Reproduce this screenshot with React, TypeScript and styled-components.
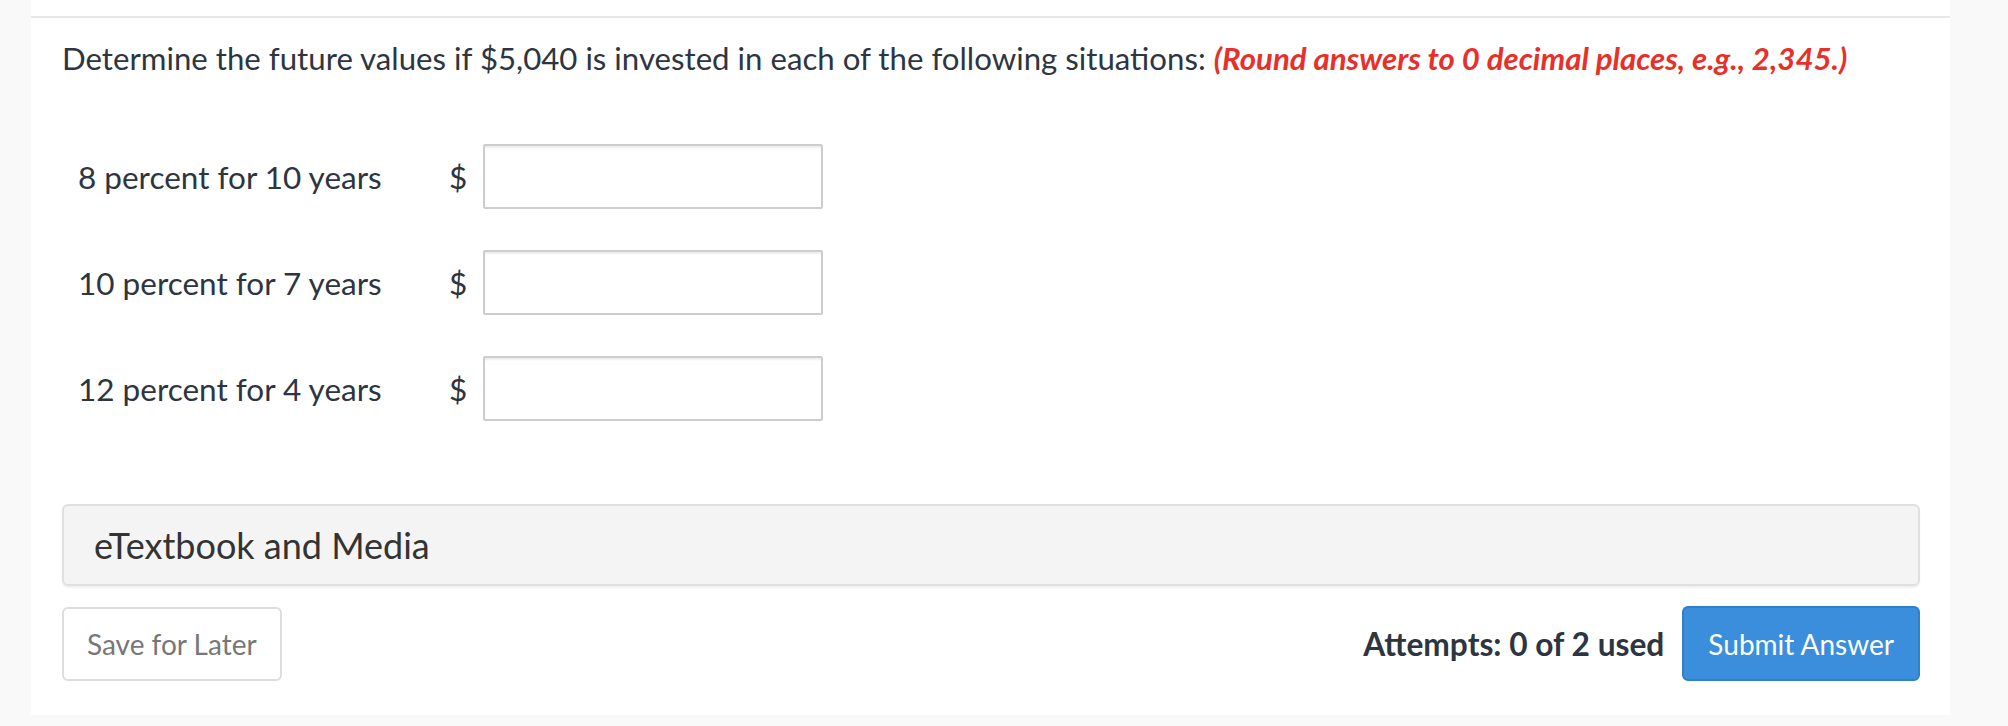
import styled, { createGlobalStyle } from "styled-components"

const GlobalStyle = createGlobalStyle`
  body {
    margin: 0;
    background-color: #f9f9f9;
    font-family: Lato, "Noto Sans", sans-serif;
    color: #2d3540;
  }
`

const Panel = styled.div`
  margin-left: 31px;
  width: 1919px;
  padding-top: 16px;
  background-color: #fff;
`

const Content = styled.div`
  border-top: 2px solid #e8e8e8;
  padding: 0 30px 34px 31px;
`

const Prompt = styled.p`
  margin: 20px 0 0;
  font-size: 31.2px;
  line-height: 40px;
`

const Hint = styled.em`
  color: #e8302a;
  font-weight: 700;
`

const Rows = styled.div`
  display: grid;
  grid-template-columns: 371px 34px 340px;
  grid-auto-rows: 65px;
  row-gap: 41px;
  align-items: center;
  margin-top: 66px;
  padding-left: 16px;
`

const Label = styled.span`
  font-size: 31.5px;
`

const Currency = styled.span`
  font-size: 31.5px;
`

const Field = styled.input`
  box-sizing: border-box;
  width: 340px;
  height: 65px;
  border: 2px solid #cdcdcd;
  border-radius: 2px;
  box-shadow: inset 0 2px 2px rgba(0, 0, 0, 0.07);
  font: inherit;
  font-size: 26px;
  padding: 0 12px;
`

const MediaBar = styled.div`
  box-sizing: border-box;
  height: 82px;
  margin-top: 83px;
  display: flex;
  align-items: center;
  padding-left: 30px;
  background-color: #f4f4f4;
  border: 2px solid #e0e0e0;
  border-radius: 6px;
  box-shadow: 0 2px 2px rgba(0, 0, 0, 0.06);
  font-size: 36px;
  color: #333;
`

const Footer = styled.div`
  display: flex;
  align-items: center;
  margin-top: 20px;
  height: 75px;
`

const Button = styled.button<{ $primary?: boolean }>`
  box-sizing: border-box;
  height: ${(p) => (p.$primary ? "75px" : "74px")};
  padding: 0 ${(p) => (p.$primary ? "24px" : "23px")};
  border-radius: 6px;
  font-family: Lato, "Noto Sans", sans-serif;
  font-size: 28px;
  cursor: pointer;
  border: 2px solid ${(p) => (p.$primary ? "#2f7fc9" : "#dddddd")};
  background-color: ${(p) => (p.$primary ? "#3a8edb" : "#fff")};
  color: ${(p) => (p.$primary ? "#fff" : "#777")};
`

const Attempts = styled.span`
  margin-left: auto;
  margin-right: 18px;
  font-size: 31.7px;
  font-weight: 700;
`

const rows = ["8 percent for 10 years", "10 percent for 7 years", "12 percent for 4 years"]

const App: React.FC = () => {
  return (
    <>
      <GlobalStyle />
      <Panel>
        <Content>
          <Prompt>
            Determine the future values if $5,040 is invested in each of the following situations:{" "}
            <Hint>(Round answers to 0 decimal places, e.g., 2,345.)</Hint>
          </Prompt>
          <Rows>
            {rows.map((r) => (
              <>
                <Label key={r}>{r}</Label>
                <Currency>$</Currency>
                <Field type="text" />
              </>
            ))}
          </Rows>
          <MediaBar>eTextbook and Media</MediaBar>
          <Footer>
            <Button>Save for Later</Button>
            <Attempts>Attempts: 0 of 2 used</Attempts>
            <Button $primary>Submit Answer</Button>
          </Footer>
        </Content>
      </Panel>
    </>
  )
}

export default App
